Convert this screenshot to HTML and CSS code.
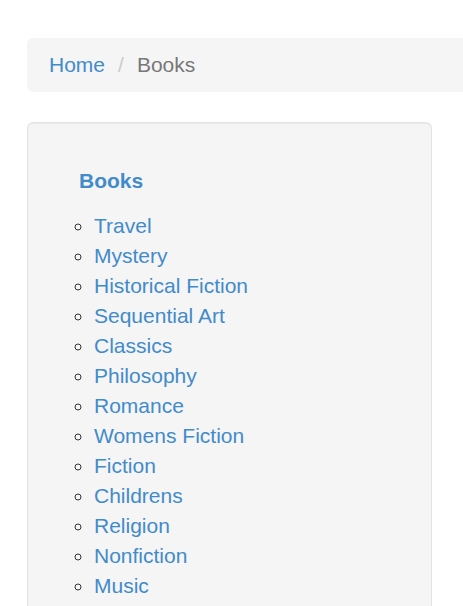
FILE: index.html
```html
<!DOCTYPE html>
<html>
<head>
<meta charset="utf-8">
<link rel="stylesheet" href="styles.css">
</head>
<body>
<div class="page">
  <ul class="breadcrumb">
    <li><a href="#">Home</a></li>
    <li class="active">Books</li>
  </ul>
  <aside class="well">
    <ul class="nav-list">
      <li>
        <a class="top" href="#"><strong>Books</strong></a>
        <ul class="cats">
          <li><a href="#">Travel</a></li>
          <li><a href="#">Mystery</a></li>
          <li><a href="#">Historical Fiction</a></li>
          <li><a href="#">Sequential Art</a></li>
          <li><a href="#">Classics</a></li>
          <li><a href="#">Philosophy</a></li>
          <li><a href="#">Romance</a></li>
          <li><a href="#">Womens Fiction</a></li>
          <li><a href="#">Fiction</a></li>
          <li><a href="#">Childrens</a></li>
          <li><a href="#">Religion</a></li>
          <li><a href="#">Nonfiction</a></li>
          <li><a href="#">Music</a></li>
        </ul>
      </li>
    </ul>
  </aside>
</div>
</body>
</html>
```
FILE: styles.css
```css
html, body {
  margin: 0;
  padding: 0;
  overflow: hidden;
  height: 606px;
  background: #fff;
}
body {
  font-family: "Liberation Sans", Arial, sans-serif;
  font-size: 21px;
  line-height: 30px;
  color: #333;
}
a {
  color: #428bca;
  text-decoration: none;
}
.page {
  padding: 38px 0 0 27px;
}
.breadcrumb {
  list-style: none;
  margin: 0 0 30px 0;
  padding: 12px 22px;
  width: 392px;
  background: #f5f5f5;
  border-radius: 6px 0 0 6px;
  display: flex;
}
.breadcrumb li + li::before {
  content: "/";
  color: #ccc;
  padding: 0 13px 0 13px;
}
.breadcrumb .active {
  color: #777;
}
.well {
  box-sizing: border-box;
  width: 405px;
  height: 484px;
  padding: 28px;
  background: #f5f5f5;
  border: 1px solid #e3e3e3;
  border-bottom: none;
  border-radius: 6px 6px 0 0;
  box-shadow: inset 0 1px 1px rgba(0,0,0,.05);
}
.nav-list {
  list-style: none;
  margin: 0;
  padding: 0;
}
.nav-list .top {
  display: block;
  padding: 15px 23px;
}
.cats {
  margin: 0;
  padding-left: 38px;
  list-style: circle;
}
.cats li {
  padding: 0;
}
```
